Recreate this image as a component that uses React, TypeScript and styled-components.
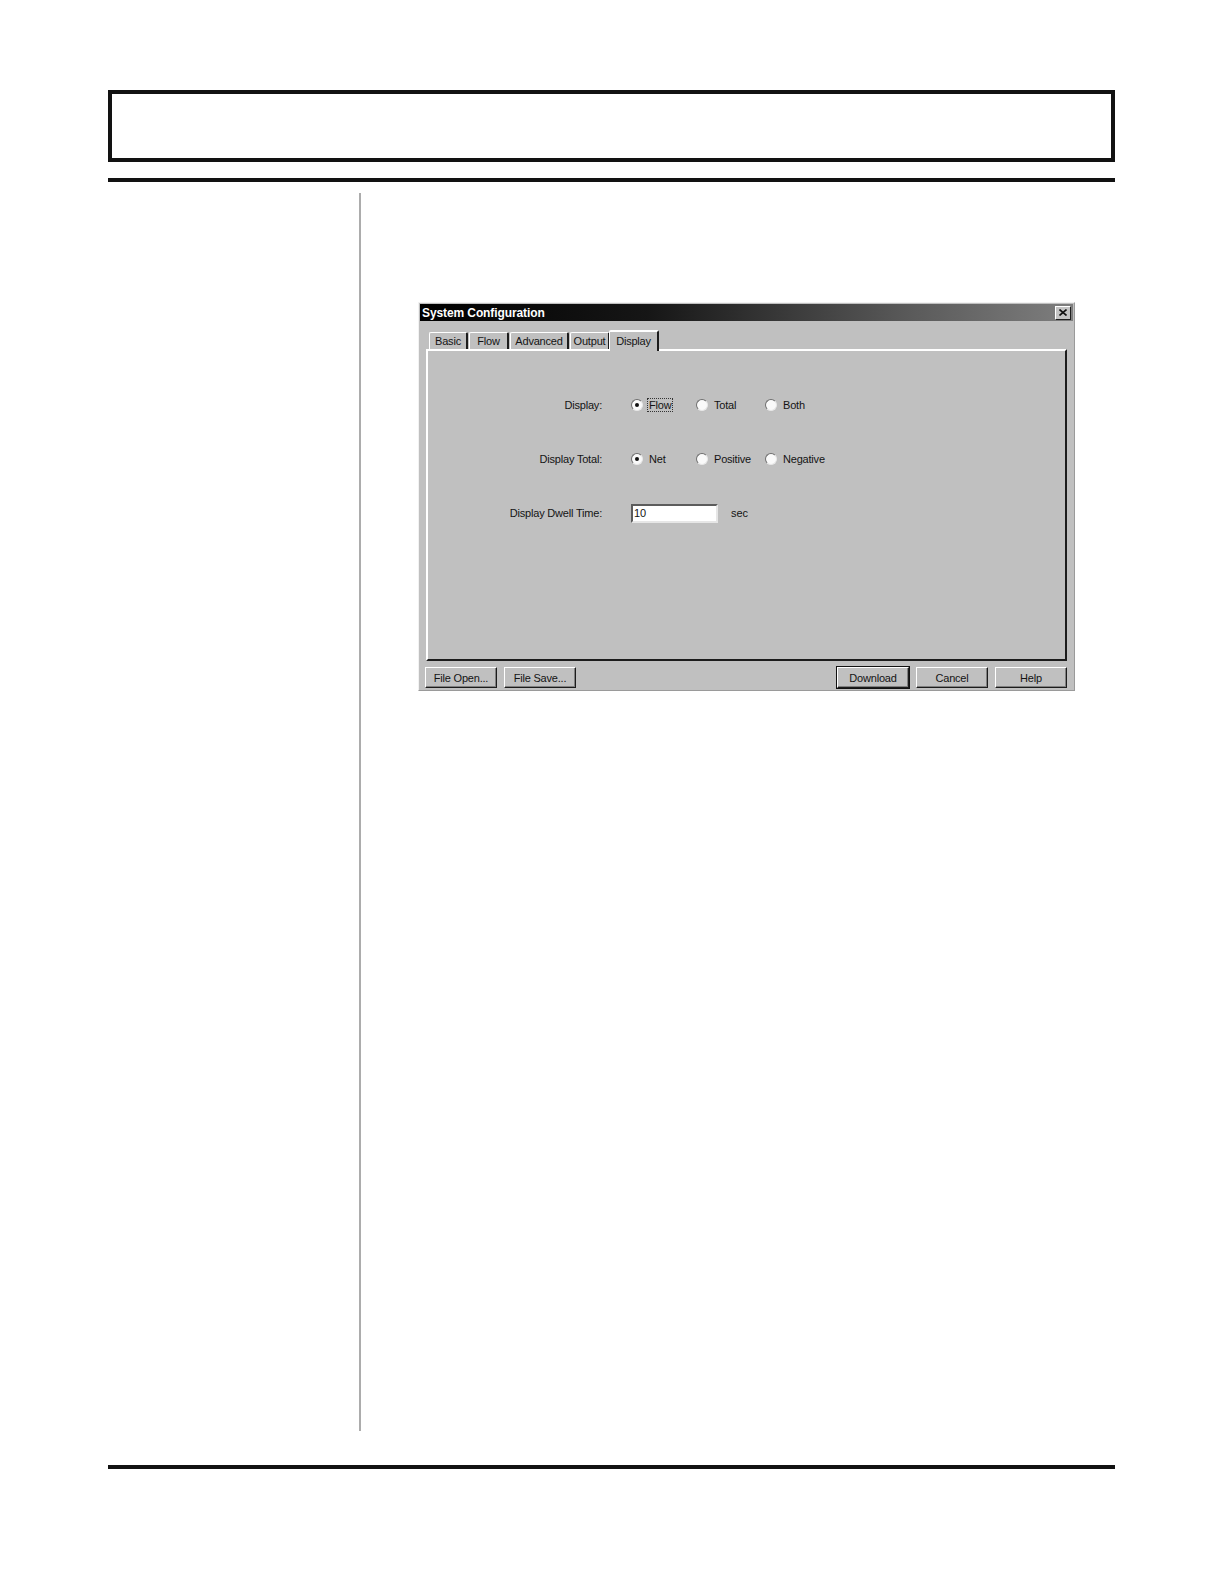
import React from 'react';
import styled, { createGlobalStyle, css } from 'styled-components';

const GlobalStyle = createGlobalStyle`
  body {
    margin: 0;
    background: #ffffff;
    font-family: "Liberation Sans", Arial, sans-serif;
  }
`;

const Page = styled.div`
  width: 1007px;
  padding: 90px 0 0 108px;
`;

const HeaderBox = styled.div`
  height: 72px;
  box-sizing: border-box;
  border: 4px solid #121212;
`;

const Rule = styled.div<{ $top: number }>`
  height: 4px;
  margin-top: ${(p) => p.$top}px;
  background: #121212;
`;

const Body = styled.div`
  display: flex;
  margin-top: 11px;
  height: 1238px;
`;

const SideColumn = styled.div`
  width: 251px;
  border-right: 2px solid #acacac;
`;

const Main = styled.div`
  padding: 109px 0 0 57px;
`;

const Dialog = styled.div`
  width: 657px;
  height: 389px;
  box-sizing: border-box;
  padding: 1px;
  background: #c0c0c0;
  border: 1px solid;
  border-color: #f2f2f2 #9a9a9a #9a9a9a #f2f2f2;
  display: flex;
  flex-direction: column;
  font-size: 11px;
  color: #141414;
`;

const TitleBar = styled.div`
  height: 17px;
  display: flex;
  align-items: center;
  justify-content: space-between;
  padding: 0 2px;
  background: linear-gradient(90deg, #000000 0%, #161616 35%, #5a5a5a 75%, #7e7e7e 100%);
`;

const TitleText = styled.span`
  color: #ffffff;
  font-weight: bold;
  font-size: 12px;
  letter-spacing: -0.1px;
`;

const CloseButton = styled.div`
  width: 16px;
  height: 14px;
  box-sizing: border-box;
  background: #c4c4c4;
  border: 1px solid;
  border-color: #ffffff #202020 #202020 #ffffff;
  display: flex;
  align-items: center;
  justify-content: center;
`;

const TabStrip = styled.div`
  display: flex;
  align-items: flex-end;
  height: 19px;
  margin: 9px 6px 0;
  padding-left: 3px;
  position: relative;
  z-index: 1;
`;

const Tab = styled.div<{ $width: number; $active?: boolean }>`
  width: ${(p) => p.$width}px;
  height: 17px;
  box-sizing: border-box;
  padding-top: 2px;
  text-align: center;
  background: #c0c0c0;
  border-top: 1px solid #ffffff;
  border-left: 1px solid #ffffff;
  border-right: 2px solid #1c1c1c;
  border-radius: 2px 2px 0 0;
  margin-right: 1px;
  letter-spacing: -0.2px;
  ${(p) =>
    p.$active &&
    css`
      height: 21px;
      margin: 0 0 -2px -2px;
      padding-top: 3px;
      border-top-width: 2px;
    `}
`;

const Panel = styled.div`
  height: 312px;
  box-sizing: border-box;
  margin: 0 6px;
  border: 1px solid;
  border-width: 2px 2px 2px 2px;
  border-color: #ffffff #1c1c1c #1c1c1c #ffffff;
  padding-top: 44px;
  display: flex;
  flex-direction: column;
  gap: 34px;
`;

const FieldRow = styled.div`
  display: flex;
  align-items: center;
  height: 20px;
`;

const FieldLabel = styled.div`
  width: 174px;
  padding-right: 29px;
  text-align: right;
  letter-spacing: -0.2px;
`;

const RadioOption = styled.label<{ $width: number }>`
  width: ${(p) => p.$width}px;
  display: flex;
  align-items: center;
  gap: 4px;
  letter-spacing: -0.2px;
`;

const RadioCircle = styled.span<{ $checked?: boolean }>`
  width: 12px;
  height: 12px;
  box-sizing: border-box;
  border-radius: 50%;
  border: 1px solid;
  border-color: #6e6e6e #e8e8e8 #e8e8e8 #6e6e6e;
  background: #fafafa;
  display: flex;
  align-items: center;
  justify-content: center;
  &::after {
    content: '';
    width: 4px;
    height: 4px;
    border-radius: 50%;
    background: ${(p) => (p.$checked ? '#111111' : 'transparent')};
  }
`;

const OptionText = styled.span<{ $focused?: boolean }>`
  padding: 0 1px;
  border: 1px dotted ${(p) => (p.$focused ? '#333333' : 'transparent')};
`;

const TextInput = styled.div`
  width: 87px;
  height: 19px;
  box-sizing: border-box;
  background: #ffffff;
  border: 2px solid;
  border-color: #5c5c5c #e6e6e6 #e6e6e6 #5c5c5c;
  padding-left: 1px;
  line-height: 15px;
`;

const Unit = styled.span`
  margin-left: 13px;
`;

const ButtonRow = styled.div`
  display: flex;
  gap: 7px;
  margin: 6px 6px 0 5px;
`;

const Spacer = styled.div`
  flex: 1;
`;

const Button = styled.div<{ $default?: boolean }>`
  width: 72px;
  height: 21px;
  box-sizing: border-box;
  display: flex;
  align-items: center;
  justify-content: center;
  border: 1px solid;
  border-color: #ffffff #1c1c1c #1c1c1c #ffffff;
  box-shadow: inset -1px -1px 0 #808080;
  letter-spacing: -0.2px;
  ${(p) =>
    p.$default &&
    css`
      outline: 1px solid #111111;
    `}
`;

const tabs = [
  { name: 'Basic', width: 39 },
  { name: 'Flow', width: 40 },
  { name: 'Advanced', width: 59 },
  { name: 'Output', width: 40 },
  { name: 'Display', width: 50, active: true },
];

const Radio: React.FC<{ label: string; width: number; checked?: boolean; focused?: boolean }> = ({
  label,
  width,
  checked,
  focused,
}) => (
  <RadioOption $width={width}>
    <RadioCircle $checked={checked} />
    <OptionText $focused={focused}>{label}</OptionText>
  </RadioOption>
);

export default function App() {
  return (
    <>
      <GlobalStyle />
      <Page>
        <HeaderBox />
        <Rule $top={16} />
        <Body>
          <SideColumn />
          <Main>
            <Dialog>
              <TitleBar>
                <TitleText>System Configuration</TitleText>
                <CloseButton>
                  <svg width="8" height="7" viewBox="0 0 8 7">
                    <path d="M0.5 0.5 L7.5 6.5 M7.5 0.5 L0.5 6.5" stroke="#111" strokeWidth="1.6" />
                  </svg>
                </CloseButton>
              </TitleBar>
              <TabStrip>
                {tabs.map((t) => (
                  <Tab key={t.name} $width={t.width} $active={t.active}>
                    {t.name}
                  </Tab>
                ))}
              </TabStrip>
              <Panel>
                <FieldRow>
                  <FieldLabel>Display:</FieldLabel>
                  <Radio label="Flow" width={65} checked focused />
                  <Radio label="Total" width={69} />
                  <Radio label="Both" width={69} />
                </FieldRow>
                <FieldRow>
                  <FieldLabel>Display Total:</FieldLabel>
                  <Radio label="Net" width={65} checked />
                  <Radio label="Positive" width={69} />
                  <Radio label="Negative" width={69} />
                </FieldRow>
                <FieldRow>
                  <FieldLabel>Display Dwell Time:</FieldLabel>
                  <TextInput>10</TextInput>
                  <Unit>sec</Unit>
                </FieldRow>
              </Panel>
              <ButtonRow>
                <Button>File Open...</Button>
                <Button>File Save...</Button>
                <Spacer />
                <Button $default>Download</Button>
                <Button>Cancel</Button>
                <Button>Help</Button>
              </ButtonRow>
            </Dialog>
          </Main>
        </Body>
        <Rule $top={34} />
      </Page>
    </>
  );
}
